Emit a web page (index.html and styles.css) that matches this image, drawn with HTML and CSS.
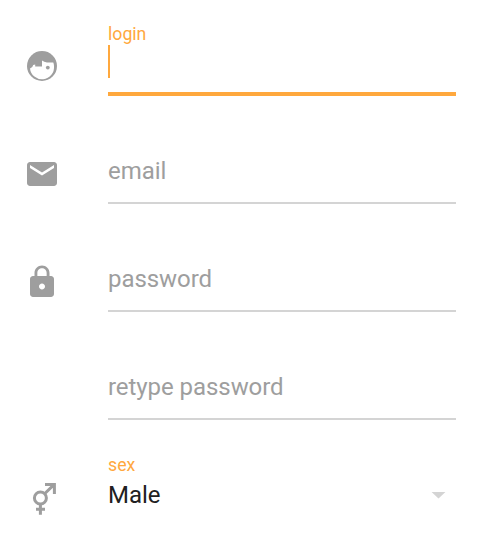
FILE: index.html
```html
<!DOCTYPE html>
<html lang="en">
<head>
<meta charset="utf-8">
<title>Sign up</title>
<link rel="stylesheet" href="styles.css">
</head>
<body>
<form class="form">
  <div class="row">
    <svg class="icon" viewBox="0 0 36 36"><circle cx="18" cy="18" r="15"/><path class="cut" d="M6 20.5Q8.6 20 9.2 17L11.2 16.4V18.4H18V12.6Q20 14.4 23 14.4H29.3Q30 16 30 18A12 12 0 0 1 6 20.5Z"/><circle cx="23.8" cy="19.6" r="1.9"/></svg>
    <label class="field active"><span class="label">login</span><span class="value"><i class="caret"></i></span></label>
  </div>
  <div class="row">
    <svg class="icon" viewBox="0 0 24 24"><path d="M20 4H4c-1.1 0-1.99.9-1.99 2L2 18c0 1.1.9 2 2 2h16c1.1 0 2-.9 2-2V6c0-1.1-.9-2-2-2zm0 4l-8 5-8-5V6l8 5 8-5v2z"/></svg>
    <label class="field"><span class="label"></span><span class="value">email</span></label>
  </div>
  <div class="row">
    <svg class="icon" viewBox="0 0 24 24"><path d="M18 8h-1V6c0-2.76-2.24-5-5-5S7 3.24 7 6v2H6c-1.1 0-2 .9-2 2v10c0 1.1.9 2 2 2h12c1.1 0 2-.9 2-2V10c0-1.1-.9-2-2-2zm-6 9c-1.1 0-2-.9-2-2s.9-2 2-2 2 .9 2 2-.9 2-2 2zm3.1-9H8.9V6c0-1.71 1.39-3.1 3.1-3.1 1.71 0 3.1 1.39 3.1 3.1v2z"/></svg>
    <label class="field"><span class="label"></span><span class="value">password</span></label>
  </div>
  <div class="row">
    <span class="icon"></span>
    <label class="field"><span class="label"></span><span class="value">retype password</span></label>
  </div>
  <div class="row">
    <svg class="icon" viewBox="0 0 36 36"><g class="stroke"><circle cx="16.4" cy="18" r="6"/><path d="M20.6 13.8L30 4.6M21 4.6H30.4V14M16.4 24V34.8M12 29.3H21"/></g></svg>
    <div class="field select"><span class="label">sex</span><span class="value">Male<i class="arrow"></i></span></div>
  </div>
</form>
</body>
</html>
```
FILE: styles.css
```css
body {
  margin: 0;
  background: #fff;
  font-family: Roboto, sans-serif;
}
.form {
  display: flex;
  flex-direction: column;
  padding: 12px 24px 0;
}
.row {
  display: flex;
  gap: 48px;
  height: 96px;
  padding-top: 12px;
}
.row:last-child {
  height: 88px;
}
.icon {
  flex: none;
  width: 36px;
  height: 36px;
  margin-top: 24px;
  fill: #9e9e9e;
}
.cut {
  fill: #fff;
}
.stroke {
  fill: none;
  stroke: #9e9e9e;
  stroke-width: 3;
}
.field {
  box-sizing: border-box;
  display: flex;
  flex-direction: column;
  flex: 1;
  height: 72px;
  border-bottom: 2px solid #d4d4d4;
  color: #9e9e9e;
}
.active {
  border-bottom: 4px solid #ffa83d;
}
.select {
  border-bottom: none;
  margin-top: -1px;
  color: #212121;
}
.label {
  height: 20px;
  font-size: 17.7px;
  line-height: 20px;
  color: #ffa83d;
}
.value {
  display: flex;
  align-items: center;
  justify-content: space-between;
  height: 38px;
  font-size: 24px;
  letter-spacing: -0.06px;
}
.active .value {
  height: 34px;
}
.select .value {
  height: 40px;
}
.caret {
  width: 2px;
  height: 33px;
  background: #ffa83d;
}
.arrow {
  width: 15px;
  height: 7px;
  margin-right: 10px;
  background: #d4d4d4;
  clip-path: polygon(0 0, 100% 0, 50% 100%);
}
```
